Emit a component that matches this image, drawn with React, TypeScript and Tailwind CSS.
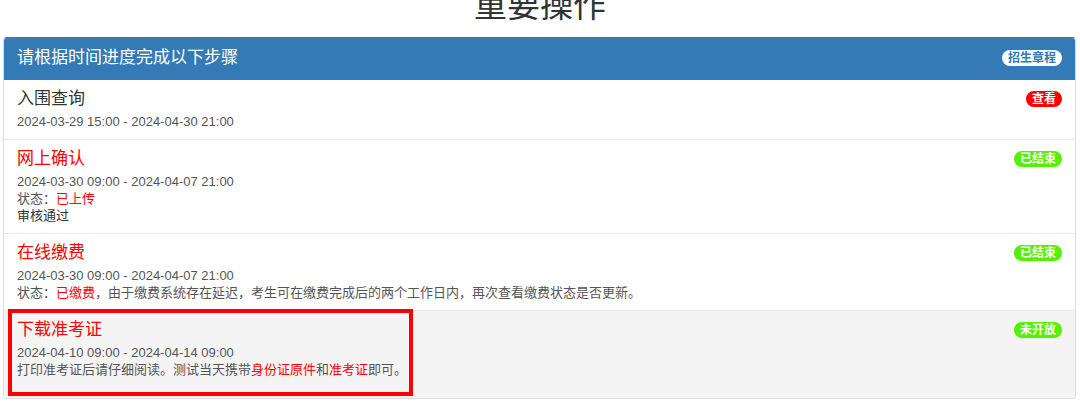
import React from "react";

type Step = {
  title: string;
  titleRed: boolean;
  time: string;
  badge: { text: string; tone: "red" | "green" };
  lines?: React.ReactNode[];
  muted?: boolean;
  marked?: boolean;
};

const red = "text-[#ff0000]";

const steps: Step[] = [
  {
    title: "入围查询",
    titleRed: false,
    time: "2024-03-29 15:00 - 2024-04-30 21:00",
    badge: { text: "查看", tone: "red" },
  },
  {
    title: "网上确认",
    titleRed: true,
    time: "2024-03-30 09:00 - 2024-04-07 21:00",
    badge: { text: "已结束", tone: "green" },
    lines: [
      <>
        状态：<span className={red}>已上传</span>
      </>,
      <span className="text-[#333]">审核通过</span>,
    ],
  },
  {
    title: "在线缴费",
    titleRed: true,
    time: "2024-03-30 09:00 - 2024-04-07 21:00",
    badge: { text: "已结束", tone: "green" },
    lines: [
      <>
        状态：<span className={red}>已缴费</span>，由于缴费系统存在延迟，考生可在缴费完成后的两个工作日内，再次查看缴费状态是否更新。
      </>,
    ],
  },
  {
    title: "下载准考证",
    titleRed: true,
    time: "2024-04-10 09:00 - 2024-04-14 09:00",
    badge: { text: "未开放", tone: "green" },
    muted: true,
    marked: true,
    lines: [
      <>
        打印准考证后请仔细阅读。测试当天携带<span className={red}>身份证原件</span>和
        <span className={red}>准考证</span>即可。
      </>,
    ],
  },
];

function Badge({ text, tone }: { text: string; tone: "red" | "green" | "white" }) {
  const cls =
    tone === "red"
      ? "bg-[#ff0000] text-white"
      : tone === "green"
        ? "bg-[#55f000] text-white"
        : "bg-white text-[#337ab7]";
  return (
    <span className={`inline-block rounded-[10px] px-[6px] py-[1px] text-[12px] leading-[14px] font-bold ${cls}`}>
      {text}
    </span>
  );
}

export default function App() {
  return (
    <div
      className="w-[1080px] h-[409px] overflow-hidden bg-white"
      style={{ fontFamily: '"Liberation Sans", "Noto Sans CJK SC", sans-serif' }}
    >
      <div className="h-[37px] flex justify-center">
        <h1 className="mt-[-11px] text-[33px] leading-[33px] font-normal text-[#333]">重要操作</h1>
      </div>

      <div className="ml-[3px] mr-[4px] border border-[#dddddd] border-t-[#337ab7] rounded-[4px] overflow-hidden">
        <div className="h-[42px] bg-[#337ab7] px-[13px] flex items-center justify-between">
          <span className="text-[17px] leading-[24px] text-white -mt-[3px]">请根据时间进度完成以下步骤</span>
          <span className="-mt-[5px]">
            <Badge text="招生章程" tone="white" />
          </span>
        </div>

        {steps.map((s, i) => (
          <div
            key={s.title}
            className={`relative px-[13px] pt-[7px] ${i === steps.length - 1 ? "pb-[20px]" : "pb-[9px] border-b border-[#e8e8e8]"} ${
              s.muted ? "bg-[#f4f4f4]" : "bg-white"
            }`}
          >
            <div className="flex items-center justify-between h-[24px] mb-[2px]">
              <span className={`text-[17px] leading-[24px] ${s.titleRed ? red : "text-[#333]"}`}>{s.title}</span>
              <Badge text={s.badge.text} tone={s.badge.tone} />
            </div>
            <div className="text-[13px] leading-[17px] text-[#555]">
              <div>{s.time}</div>
              {s.lines?.map((l, j) => (
                <div key={j}>{l}</div>
              ))}
            </div>
            {s.marked && (
              <div className="absolute left-[4px] top-[-2px] w-[405px] h-[87px] border-[4px] border-[#ff0000] pointer-events-none" />
            )}
          </div>
        ))}
      </div>
    </div>
  );
}
